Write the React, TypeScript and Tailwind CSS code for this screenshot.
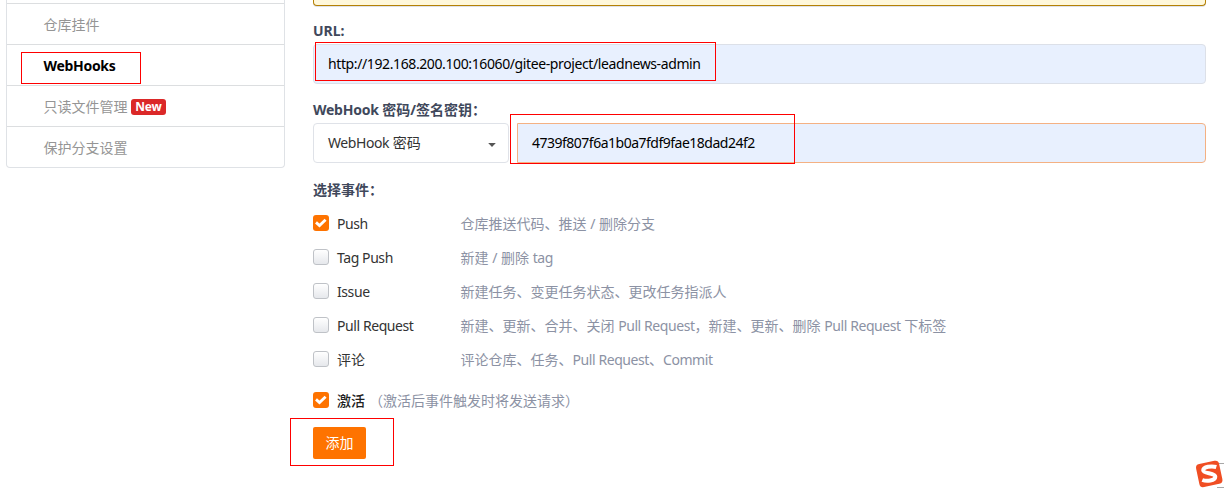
import React from "react";

const MENU = [
  { label: "仓库挂件" },
  { label: "WebHooks", active: true },
  { label: "只读文件管理", badge: "New" },
  { label: "保护分支设置" },
];

const EVENTS = [
  { label: "Push", desc: "仓库推送代码、推送 / 删除分支", checked: true },
  { label: "Tag Push", desc: "新建 / 删除 tag" },
  { label: "Issue", desc: "新建任务、变更任务状态、更改任务指派人" },
  { label: "Pull Request", desc: "新建、更新、合并、关闭 Pull Request，新建、更新、删除 Pull Request 下标签" },
  { label: "评论", desc: "评论仓库、任务、Pull Request、Commit" },
];

/** Sets Latin words slightly tighter than the surrounding Chinese text. */
function Mixed({ text }: { text: string }) {
  return (
    <>
      {text.split(/([A-Za-z]+(?: [A-Za-z]+)*)/).map((part, i) =>
        i % 2 ? (
          <span key={i} className="tracking-[-0.42px]">
            {part}
          </span>
        ) : (
          part
        ),
      )}
    </>
  );
}

function Checkbox({ checked }: { checked?: boolean }) {
  if (!checked) {
    return (
      <span className="block size-4 shrink-0 rounded-[3px] border border-[#bfc2c7] bg-linear-to-b from-white to-[#e6e8ec]" />
    );
  }
  return (
    <span className="flex size-4 shrink-0 items-center justify-center rounded-[3px] bg-[#fe7300]">
      <svg viewBox="0 0 16 16" className="size-4" fill="none" stroke="#fff" strokeWidth="2.8">
        <path d="M3 7.4 L6.5 10.6 L12.6 4.8" />
      </svg>
    </span>
  );
}

function Marker({ className }: { className: string }) {
  return <span className={`pointer-events-none absolute border border-[#fe0000] ${className}`} />;
}

function Sidebar() {
  return (
    <nav className="ml-1.5 h-[168px] w-[279px] shrink-0 overflow-hidden rounded-b border border-t-0 border-[#dfe2e6] pt-[3px]">
      {MENU.map((item) => (
        <div
          key={item.label}
          className="flex h-[41px] items-center border-t border-[#dcdee0] pl-[36.5px] text-[#959595]"
        >
          <span className={item.active ? "pt-px font-bold tracking-[-0.3px] text-black" : "pt-0.5"}>
            {item.label}
          </span>
          {item.badge && (
            <span className="mt-0.5 ml-[3.5px] flex h-4 w-[35px] items-center justify-center rounded-[3px] bg-[#db2828] text-xs font-bold tracking-[-0.2px] text-white">
              {item.badge}
            </span>
          )}
        </div>
      ))}
    </nav>
  );
}

function SogouIcon() {
  return (
    <svg className="absolute top-[458px] left-[1193px]" width="31" height="32" viewBox="0 0 31 32">
      <path d="M24 5.5H31M24 29.5H31" stroke="#a8a8a8" />
      <rect x="4.5" y="4.2" width="23.5" height="23.5" rx="4" fill="#f04e23" transform="rotate(-12 16.2 16)" />
      <path
        d="M23.3 9C18.5 7.6 10.3 8.8 10.2 12.2C10.2 16 22.4 14.5 22.3 18.8C22.2 23 13.5 23.6 9.3 22"
        fill="none"
        stroke="#fff"
        strokeWidth="4"
      />
    </svg>
  );
}

export default function App() {
  return (
    <div
      lang="zh-CN"
      className="relative flex h-[497px] w-[1224px] overflow-hidden bg-white font-['Noto_Sans','Noto_Sans_CJK_SC',sans-serif] text-sm leading-5 text-[#40485b]"
    >
      <Sidebar />
      <main className="ml-7 w-[893px]">
        <div className="h-1.5 rounded-b border border-t-0 border-[#b58105] bg-[#fff8db] shadow-[0_1px_0_#dfe1e8]" />

        <div className="mt-[15px] font-bold">URL:</div>
        <div className="mt-[3px] flex h-10 items-center rounded border border-[#dce0e8] bg-[#e8f0fe] px-3.5 tracking-[-0.39px] text-black">
          http://192.168.200.100:16060/gitee-project/leadnews-admin
        </div>

        <div className="mt-4 font-bold">
          <span className="tracking-[-0.25px]">WebHook</span> 密码/签名密钥：
        </div>
        <div className="mt-[3px] flex h-10 gap-2">
          <div className="flex w-[196px] items-center justify-between rounded border border-[#dfe2e8] pr-3 pl-3.5 text-[#333]">
            <span>
              <Mixed text="WebHook 密码" />
            </span>
            <svg width="8" height="4" viewBox="0 0 8 4" className="mt-1" fill="#555">
              <path d="M0.2 0H7.8L4 4Z" />
            </svg>
          </div>
          <div className="flex flex-1 items-center rounded-r border border-[#f4b183] bg-[#e8f0fe] px-3.5 tracking-[-0.5px] text-black">
            4739f807f6a1b0a7fdf9fae18dad24f2
          </div>
        </div>

        <div className="mt-[17px] font-bold">选择事件：</div>
        <div className="mt-1.5">
          {EVENTS.map((event) => (
            <div key={event.label} className="flex h-[34px] items-center">
              <Checkbox checked={event.checked} />
              <span className="ml-2 w-[123.5px] pt-0.5 text-[#333]">
                <Mixed text={event.label} />
              </span>
              <span className="pt-0.5 whitespace-nowrap text-[#8c92a4]">
                <Mixed text={event.desc} />
              </span>
            </div>
          ))}
        </div>

        <div className="mt-[7px] flex h-[34px] items-center">
          <Checkbox checked />
          <span className="ml-2 pt-0.5 font-medium text-[#222]">激活</span>
          <span className="ml-1 pt-0.5 text-[#8c92a4]">（激活后事件触发时将发送请求）</span>
        </div>
        <button className="mt-2.5 block h-8 w-[53px] rounded-xs bg-[#fe7300] text-white">添加</button>
      </main>

      <Marker className="top-[52px] left-[21px] h-8 w-[120px]" />
      <Marker className="top-[42px] left-[315px] h-[39px] w-[401px]" />
      <Marker className="top-[114px] left-[510px] h-[50px] w-[285px]" />
      <Marker className="top-[418px] left-[290px] h-12 w-[104px]" />
      <SogouIcon />
    </div>
  );
}
